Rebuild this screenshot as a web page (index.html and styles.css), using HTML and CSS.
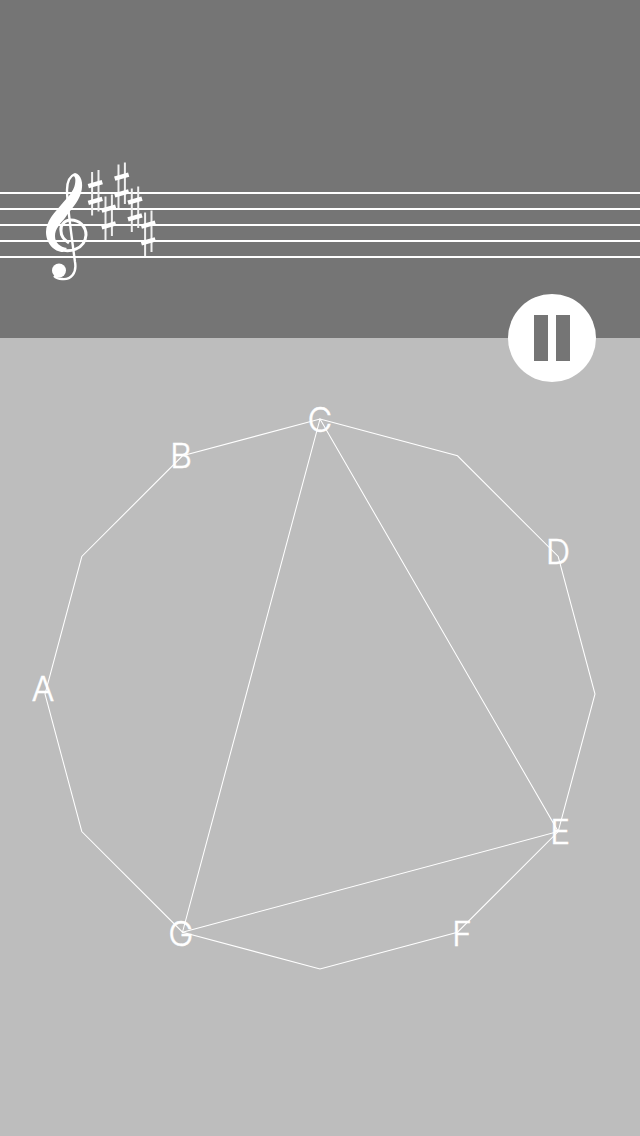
FILE: index.html
```html
<!DOCTYPE html>
<html lang="en">
<head>
  <meta charset="UTF-8">
  <meta name="viewport" content="width=device-width, initial-scale=1.0">
  <title>Circle of notes</title>
  <link rel="stylesheet" href="styles.css">
</head>
<body>
  <div class="player">
    <div class="staff-panel">
      <svg class="staff" width="640" height="338" viewBox="0 0 640 338">
        <defs>
          <g id="sharp">
            <path class="stem" d="M-3.2-20.5V23M3.2-22.5V19"/>
            <path class="bar" d="M-7-6.3L7-10.3M-7 10.3L7 6.3"/>
          </g>
        </defs>
        <path class="staff-lines" d="M0 193H640M0 209H640M0 225H640M0 241H640M0 257H640"/>
        <!-- treble clef -->
        <path class="clef-body" d="M75 173C81 174 84 183 81 193C78 203 70 210 65 218C60 224 55 229 55 236C55 243 60 247 67 248L63 252C54 252 46 243 46 232C46 221 55 212 61 205C68 197 74 191 75 184C76 179 75 176 73 176Z"/>
        <path class="clef-line" d="M60 249C68 253 85 250 86 235C86 226 79 220 71 220C64 220 60 226 61 231C61 236 64 240 69 243"/>
        <path class="clef-stem" d="M75 174C70 176 67 182 67 190C67 200 72 240 75 262C77 273 71 280 62 279C59 279 56 278 54 276"/>
        <circle class="clef-dot" cx="59" cy="270.5" r="7"/>
        <use href="#sharp" x="95.3" y="192.5"/>
        <use href="#sharp" x="108.7" y="217"/>
        <use href="#sharp" x="121.7" y="185"/>
        <use href="#sharp" x="135" y="209"/>
        <use href="#sharp" x="148.3" y="233"/>
      </svg>
      <button class="pause-btn" type="button" aria-label="Pause">
        <span class="pause-bar"></span>
        <span class="pause-bar"></span>
      </button>
    </div>
    <div class="circle-panel">
      <svg class="circle" width="640" height="798" viewBox="0 338 640 798">
        <polygon class="ring" points="320,419 457.5,455.8 558.2,556.5 595,694 558.2,831.5 457.5,932.2 320,969 182.5,932.2 81.8,831.5 45,694 81.8,556.5 182.5,455.8"/>
        <polygon class="ring" points="320,419 558.2,831.5 182.5,932.2"/>
        <text class="note" x="320" y="432">C</text>
        <text class="note" x="558" y="564">D</text>
        <text class="note" x="560" y="844">E</text>
        <text class="note" x="462" y="946">F</text>
        <text class="note" x="181" y="946">G</text>
        <text class="note" x="43" y="701">A</text>
        <text class="note" x="181" y="468">B</text>
      </svg>
    </div>
  </div>
</body>
</html>
```
FILE: styles.css
```css
html, body {
  margin: 0;
  padding: 0;
}
body {
  background-color: #bdbdbd;
  font-family: "Inter", "Liberation Sans", sans-serif;
}
.player {
  width: 640px;
  height: 1136px;
  overflow: hidden;
}
.staff-panel {
  position: relative;
  height: 338px;
  background-color: #757575;
}
.staff, .circle {
  display: block;
}
.staff-lines {
  fill: none;
  stroke: #fff;
  stroke-width: 2;
}
.clef-body, .clef-dot {
  fill: #fff;
}
.clef-line {
  fill: none;
  stroke: #fff;
  stroke-width: 3;
}
.clef-stem {
  fill: none;
  stroke: #fff;
  stroke-width: 2.4;
}
.stem {
  fill: none;
  stroke: #f0f0f0;
  stroke-width: 2;
}
.bar {
  fill: none;
  stroke: #fff;
  stroke-width: 4.4;
}
.pause-btn {
  position: absolute;
  left: 508px;
  top: 294px;
  width: 88px;
  height: 88px;
  padding: 0;
  border: none;
  border-radius: 50%;
  background-color: #fff;
  display: flex;
  justify-content: center;
  align-items: center;
  gap: 8px;
}
.pause-bar {
  width: 14px;
  height: 46px;
  background-color: #757575;
}
.ring {
  fill: none;
  stroke: #fff;
  stroke-width: 1.05;
}
.note {
  fill: #fff;
  stroke: #fff;
  stroke-width: 0.4;
  font-size: 34px;
  font-weight: 300;
  text-anchor: middle;
}
```
